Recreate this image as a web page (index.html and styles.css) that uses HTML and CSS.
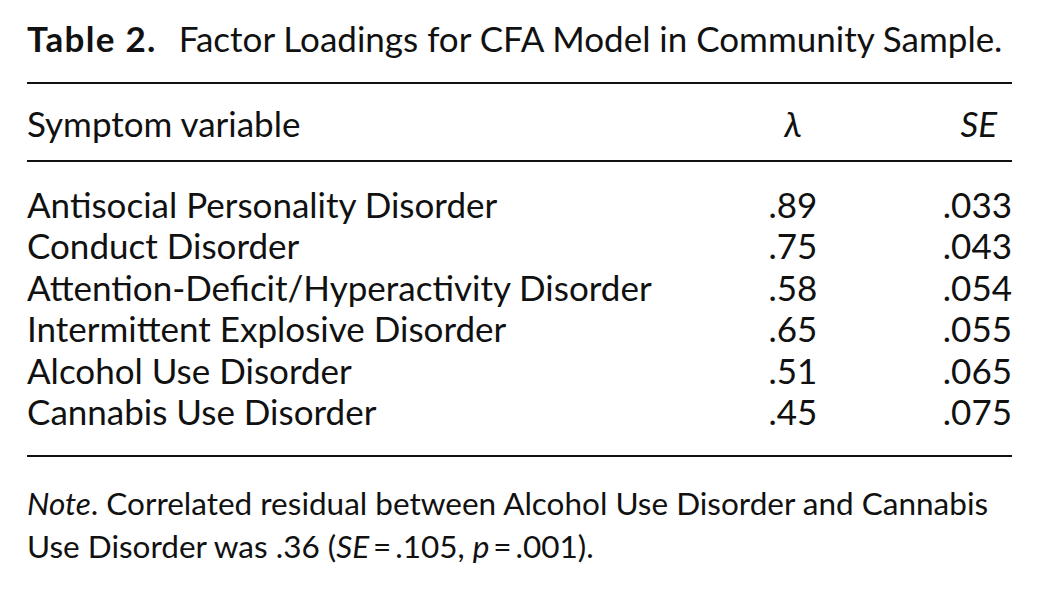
FILE: index.html
```html
<!DOCTYPE html>
<html>
<head>
<meta charset="utf-8">
<link rel="stylesheet" href="styles.css">
</head>
<body>
<div class="page">
  <div class="caption"><span class="label">Table 2.</span><span class="title">Factor Loadings for CFA Model in Community Sample.</span></div>
  <table class="data">
    <colgroup>
      <col class="c-name">
      <col class="c-lam">
      <col class="c-se">
    </colgroup>
    <thead>
      <tr>
        <th class="name">Symptom variable</th>
        <th class="lam"><i>λ</i></th>
        <th class="se"><i>SE</i></th>
      </tr>
    </thead>
    <tbody>
      <tr class="first"><td class="name">Antisocial Personality Disorder</td><td class="lam">.89</td><td class="se">.033</td></tr>
      <tr><td class="name">Conduct Disorder</td><td class="lam">.75</td><td class="se">.043</td></tr>
      <tr><td class="name">Attention-Deficit/Hyperactivity Disorder</td><td class="lam">.58</td><td class="se">.054</td></tr>
      <tr><td class="name">Intermittent Explosive Disorder</td><td class="lam">.65</td><td class="se">.055</td></tr>
      <tr><td class="name">Alcohol Use Disorder</td><td class="lam">.51</td><td class="se">.065</td></tr>
      <tr class="last"><td class="name">Cannabis Use Disorder</td><td class="lam">.45</td><td class="se">.075</td></tr>
    </tbody>
  </table>
  <p class="note"><i>Note</i>. Correlated residual between Alcohol Use Disorder and Cannabis<br>Use Disorder was .36 (<i>SE</i>&#8201;=&#8201;.105, <i>p</i>&#8201;=&#8201;.001).</p>
</div>
</body>
</html>
```

FILE: styles.css
```css
html, body {
  margin: 0;
  padding: 0;
  background: #ffffff;
}

.page {
  padding: 18px 26px 0 27px;
  font-family: "Lato", "Open Sans", sans-serif;
  font-size: 35px;
  line-height: 41px;
  color: #111111;
  width: 985px;
}

.caption {
  height: 41px;
  margin-bottom: 23px;
  white-space: nowrap;
}

.label {
  font-weight: 700;
  letter-spacing: 1.3px;
  margin-right: 22px;
}

.data {
  width: 985px;
  table-layout: fixed;
  border-collapse: collapse;
  border-top: 2px solid #111111;
  border-bottom: 2px solid #111111;
}

.c-name { width: 716px; }
.c-lam { width: 100px; }
.c-se { width: 169px; }

.data th,
.data td {
  padding: 0;
  font-weight: 400;
  text-align: left;
  white-space: nowrap;
  height: 41.4px;
  line-height: 41.4px;
}

.data thead th {
  height: 41px;
  line-height: 41px;
  padding-top: 19px;
  padding-bottom: 16px;
  border-bottom: 2px solid #111111;
}

.data .lam {
  text-align: center;
}

.data td.se {
  text-align: right;
}

.data thead th.se {
  text-align: right;
  padding-right: 15px;
}

.data tbody tr.first td {
  padding-top: 22px;
}

.data tbody tr.last td {
  padding-bottom: 23px;
}

.note {
  margin: 25px 0 0 0;
  font-size: 31.5px;
  line-height: 43px;
  width: 985px;
  white-space: nowrap;
}
```
